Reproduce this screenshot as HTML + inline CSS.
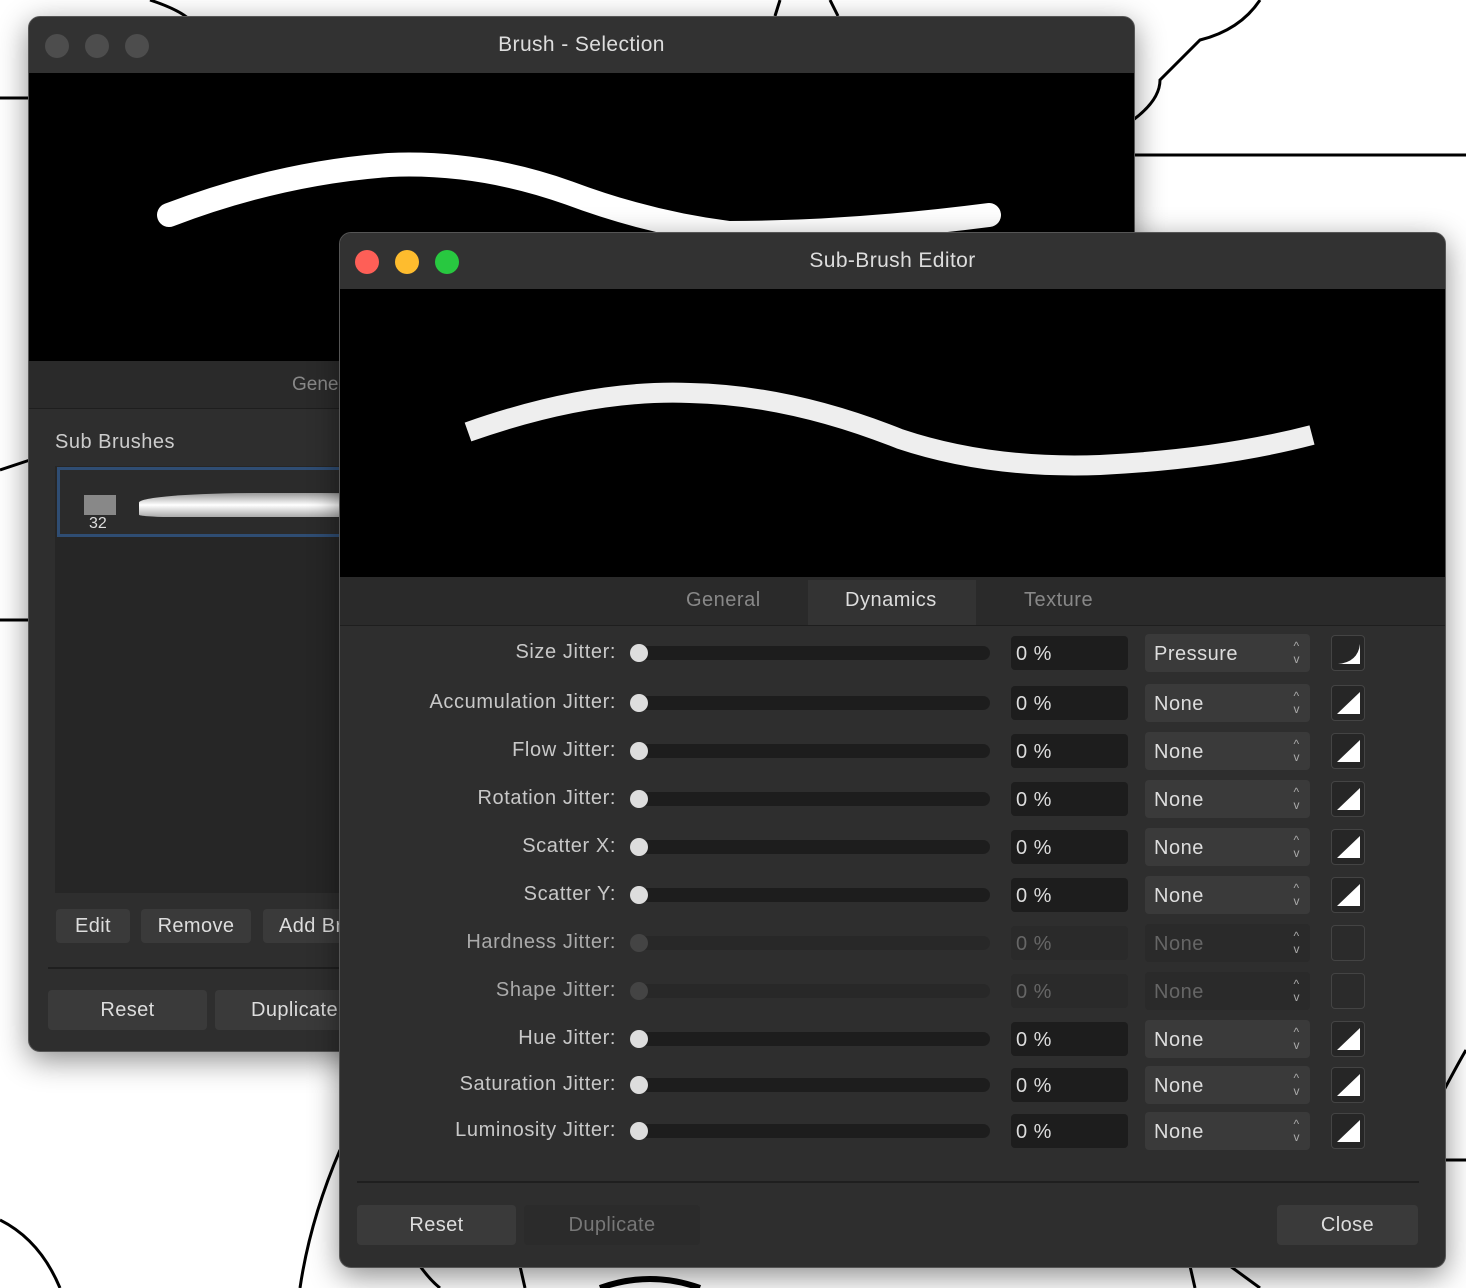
<!DOCTYPE html>
<html><head><style>
body{margin:0;width:1466px;height:1288px;background:#fff;position:relative;overflow:hidden;font-family:"Liberation Sans",sans-serif;}
.win{position:absolute;background:#2e2e2e;border-radius:12px;overflow:hidden;box-shadow:0 8px 30px rgba(0,0,0,.45);border:1px solid #555;}
.tb{position:absolute;left:0;right:0;top:0;height:56px;background:#323232;color:#ddd;font-size:21px;letter-spacing:0.4px;text-align:center;line-height:56px;}
.dot{position:absolute;top:17px;width:24px;height:24px;border-radius:50%;}
.abs{position:absolute;}
.btn{position:absolute;background:#3a3a3a;color:#ddd;font-size:20px;letter-spacing:0.4px;text-align:center;border-radius:4px;}
.row{position:absolute;left:339px;width:1105px;height:40px}
.row .l{position:absolute;left:0;width:277px;text-align:right;color:#c8c8c8;font-size:20px;letter-spacing:0.6px;top:8px;white-space:nowrap}
.row .t{position:absolute;left:291px;width:360px;height:14px;top:13px;background:#1d1d1d;border-radius:7px}
.row .k{position:absolute;left:291px;top:11px;width:18px;height:18px;border-radius:50%;background:#ddd}
.row .v{position:absolute;left:672px;top:3px;width:117px;height:34px;background:#1d1d1d;border-radius:4px;color:#ddd;font-size:20px;letter-spacing:0.5px;line-height:36px;padding-left:5px;box-sizing:border-box}
.row .d{position:absolute;left:806px;top:1px;width:165px;height:38px;background:#3a3a3a;border-radius:4px;color:#ddd;font-size:20px;letter-spacing:0.5px;line-height:40px;padding-left:9px;box-sizing:border-box}
.row .d i{position:absolute;right:10px;top:6px;font-style:normal;font-size:12px;line-height:13px;color:#aaa}
.row .c{position:absolute;left:992px;top:2px;width:34px;height:36px;background:#262626;border:1px solid #444;border-radius:4px;box-sizing:border-box}
.row.x .l{color:#aaa}.row.x .t{background:#282828}.row.x .k{background:#444}.row.x .v{background:#2a2a2a;color:#666}.row.x .d{background:#2a2a2a;color:#666}.row.x .c{background:#2b2b2b}
</style></head><body>
<svg class="abs" style="left:0;top:0" width="1466" height="1288">
<g fill="none" stroke="#000" stroke-width="3">
<path d="M0 98 L30 98"/><path d="M150 0 Q180 10 190 20"/><path d="M780 0 L775 16"/><path d="M830 0 L838 16"/>
<path d="M1133 120 Q1160 100 1160 80 Q1180 60 1200 40 Q1240 30 1260 0"/>
<path d="M1133 155 L1466 155"/><path d="M0 620 L30 620"/><path d="M0 470 L30 460"/>
<path d="M1444 1090 Q1460 1060 1466 1050"/><path d="M1444 1160 L1466 1160"/>
<path d="M0 1220 Q40 1240 60 1288"/><path d="M340 1150 Q310 1220 300 1288"/>
<path d="M420 1266 Q430 1280 440 1288"/><path d="M520 1266 L525 1288"/><path d="M1190 1266 L1195 1288"/><path d="M1230 1266 L1260 1288"/>
<path d="M600 1288 Q650 1270 700 1288" stroke-width="6"/>
</g></svg>

<div class="win" style="left:28px;top:16px;width:1105px;height:1034px;">
<div class="tb">Brush - Selection</div>
<div class="dot" style="left:16px;background:#4d4d4d"></div><div class="dot" style="left:56px;background:#4d4d4d"></div><div class="dot" style="left:96px;background:#4d4d4d"></div>
<div class="abs" style="left:0;top:56px;width:1105px;height:288px;background:#000">
<svg width="1105" height="288"><path d="M140 142 Q250 100 360 92 Q450 88 540 120 Q620 150 700 160 Q820 160 960 142" stroke="#fff" stroke-width="24" fill="none" stroke-linecap="round"/></svg></div>
<div class="abs" style="left:0;top:344px;width:1105px;height:47px;background:#2a2a2a;border-bottom:1px solid #1e1e1e;color:#888;font-size:19px;line-height:47px;"><span style="margin-left:263px">General</span></div>
<div class="abs" style="left:26px;top:414px;color:#ccc;font-size:20px;letter-spacing:0.5px">Sub Brushes</div>
<div class="abs" style="left:26px;top:449px;width:400px;height:427px;background:#262626"></div>
<div class="abs" style="left:28px;top:450px;width:400px;height:70px;border:3px solid #2f4d73;box-sizing:border-box;background:#2b2b2b"></div>
<div class="abs" style="left:55px;top:478px;width:32px;height:20px;background:#888"></div>
<div class="abs" style="left:60px;top:498px;color:#ddd;font-size:16px">32</div>
<div class="abs" style="left:110px;top:476px;width:300px;height:24px;background:linear-gradient(#999,#fff,#aaa);border-radius:40% 40% 10% 10%"></div>
<div class="btn" style="left:27px;top:892px;width:74px;height:34px;line-height:34px">Edit</div>
<div class="btn" style="left:112px;top:892px;width:110px;height:34px;line-height:34px">Remove</div>
<div class="btn" style="left:234px;top:892px;width:110px;height:34px;line-height:34px;text-align:left;padding-left:16px">Add Brush</div>
<div class="abs" style="left:19px;top:950px;width:1000px;height:2px;background:#1f1f1f"></div>
<div class="btn" style="left:19px;top:973px;width:159px;height:40px;line-height:40px">Reset</div>
<div class="btn" style="left:186px;top:973px;width:159px;height:40px;line-height:40px">Duplicate</div>
</div>

<div class="win" style="left:339px;top:232px;width:1105px;height:1034px;">
<div class="tb">Sub-Brush Editor</div>
<div class="dot" style="left:15px;background:#fe5f57"></div><div class="dot" style="left:55px;background:#febc2e"></div><div class="dot" style="left:95px;background:#28c840"></div>
<div class="abs" style="left:0;top:56px;width:1105px;height:288px;background:#000">
<svg width="1105" height="288">
<path d="M128 143 Q250 100 350 104 Q450 106 560 150 Q650 180 760 176 Q880 170 972 146" stroke="#eee" stroke-width="20" fill="none"/></svg></div>
<div class="abs" style="left:0;top:344px;width:1105px;height:48px;background:#2a2a2a;border-bottom:1px solid #1e1e1e;"></div>
<div class="abs" style="left:468px;top:347px;width:168px;height:45px;background:#333"></div>
<div class="abs" style="left:346px;top:356px;color:#888;font-size:20px;letter-spacing:0.5px">General</div>
<div class="abs" style="left:505px;top:356px;color:#ddd;font-size:20px;letter-spacing:0.5px">Dynamics</div>
<div class="abs" style="left:684px;top:356px;color:#888;font-size:20px;letter-spacing:0.5px">Texture</div>
</div>

<div class="row" style="top:633px"><div class="l">Size Jitter:</div><div class="t"></div><div class="k"></div><div class="v">0 %</div><div class="d">Pressure<i>^<br>v</i></div><div class="c"><svg width="32" height="34"><path d="M6 28 Q26 26 28 8 L28 28Z" fill="#fff"/></svg></div></div>
<div class="row" style="top:683px"><div class="l">Accumulation Jitter:</div><div class="t"></div><div class="k"></div><div class="v">0 %</div><div class="d">None<i>^<br>v</i></div><div class="c"><svg width="32" height="34"><path d="M5 28 L28 6 L28 28Z" fill="#fff"/></svg></div></div>
<div class="row" style="top:731px"><div class="l">Flow Jitter:</div><div class="t"></div><div class="k"></div><div class="v">0 %</div><div class="d">None<i>^<br>v</i></div><div class="c"><svg width="32" height="34"><path d="M5 28 L28 6 L28 28Z" fill="#fff"/></svg></div></div>
<div class="row" style="top:779px"><div class="l">Rotation Jitter:</div><div class="t"></div><div class="k"></div><div class="v">0 %</div><div class="d">None<i>^<br>v</i></div><div class="c"><svg width="32" height="34"><path d="M5 28 L28 6 L28 28Z" fill="#fff"/></svg></div></div>
<div class="row" style="top:827px"><div class="l">Scatter X:</div><div class="t"></div><div class="k"></div><div class="v">0 %</div><div class="d">None<i>^<br>v</i></div><div class="c"><svg width="32" height="34"><path d="M5 28 L28 6 L28 28Z" fill="#fff"/></svg></div></div>
<div class="row" style="top:875px"><div class="l">Scatter Y:</div><div class="t"></div><div class="k"></div><div class="v">0 %</div><div class="d">None<i>^<br>v</i></div><div class="c"><svg width="32" height="34"><path d="M5 28 L28 6 L28 28Z" fill="#fff"/></svg></div></div>
<div class="row x" style="top:923px"><div class="l">Hardness Jitter:</div><div class="t"></div><div class="k"></div><div class="v">0 %</div><div class="d">None<i>^<br>v</i></div><div class="c"></div></div>
<div class="row x" style="top:971px"><div class="l">Shape Jitter:</div><div class="t"></div><div class="k"></div><div class="v">0 %</div><div class="d">None<i>^<br>v</i></div><div class="c"></div></div>
<div class="row" style="top:1019px"><div class="l">Hue Jitter:</div><div class="t"></div><div class="k"></div><div class="v">0 %</div><div class="d">None<i>^<br>v</i></div><div class="c"><svg width="32" height="34"><path d="M5 28 L28 6 L28 28Z" fill="#fff"/></svg></div></div>
<div class="row" style="top:1065px"><div class="l">Saturation Jitter:</div><div class="t"></div><div class="k"></div><div class="v">0 %</div><div class="d">None<i>^<br>v</i></div><div class="c"><svg width="32" height="34"><path d="M5 28 L28 6 L28 28Z" fill="#fff"/></svg></div></div>
<div class="row" style="top:1111px"><div class="l">Luminosity Jitter:</div><div class="t"></div><div class="k"></div><div class="v">0 %</div><div class="d">None<i>^<br>v</i></div><div class="c"><svg width="32" height="34"><path d="M5 28 L28 6 L28 28Z" fill="#fff"/></svg></div></div>

<div class="abs" style="left:357px;top:1181px;width:1062px;height:2px;background:#1f1f1f"></div>
<div class="btn" style="left:357px;top:1205px;width:159px;height:40px;line-height:40px">Reset</div>
<div class="btn" style="left:524px;top:1205px;width:176px;height:40px;line-height:40px;background:#2b2b2b;color:#777">Duplicate</div>
<div class="btn" style="left:1277px;top:1205px;width:141px;height:40px;line-height:40px">Close</div>
</body></html>
